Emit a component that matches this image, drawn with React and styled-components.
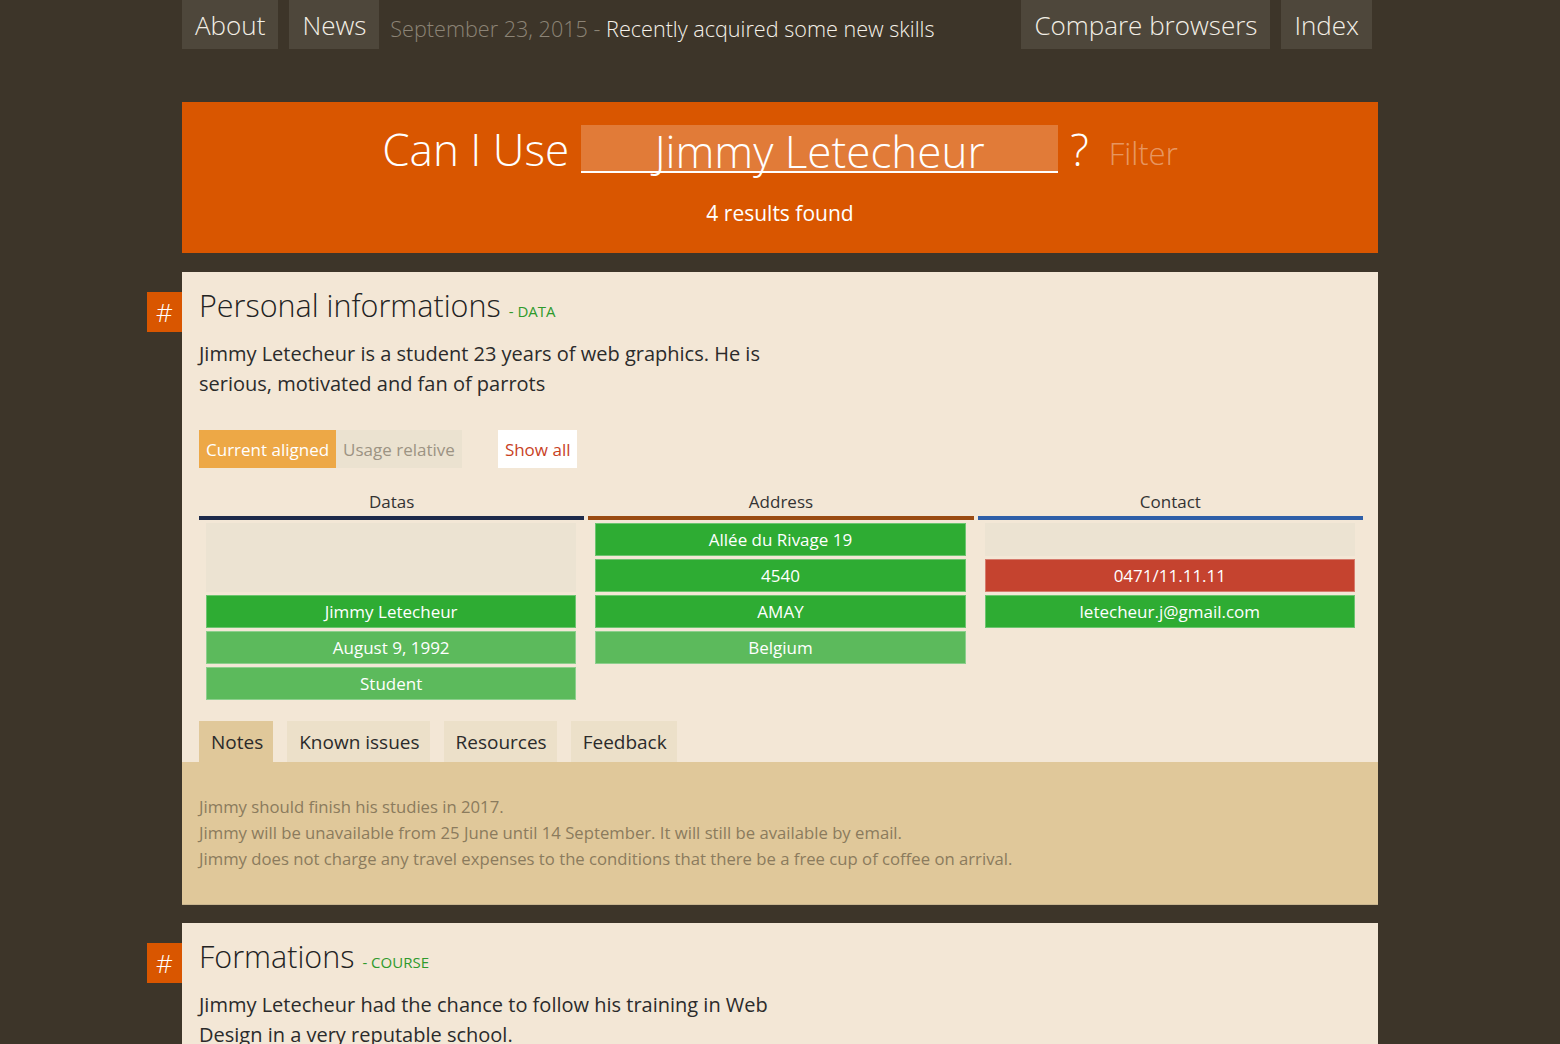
import React from "react";
import styled, { createGlobalStyle } from "styled-components";

const Global = createGlobalStyle`
  body {
    margin: 0;
    background: #3d3529;
    font-family: "Open Sans", "Liberation Sans", sans-serif;
    font-weight: 300;
  }
`;

const Page = styled.div`
  width: 1196px;
  margin: 0 auto;
  padding-bottom: 40px;
`;

const Nav = styled.nav`
  display: flex;
  align-items: stretch;
  justify-content: space-between;
  height: 49px;
`;

const NavGroup = styled.div`
  display: flex;
  align-items: stretch;
  gap: 11px;
  margin-right: ${(p) => (p.$right ? "6px" : "0")};
`;

const NavItem = styled.a`
  display: flex;
  align-items: center;
  padding: 0 13px;
  background: #4e473b;
  color: #f3efe6;
  font-size: 26px;
  font-weight: 300;
  text-decoration: none;
`;

const News = styled.div`
  display: flex;
  align-items: center;
  padding-top: 8px;
  font-size: 21.6px;
  color: #f6f2ea;
  span {
    color: #8c8476;
  }
`;

const Header = styled.header`
  margin-top: 53px;
  background: #d95600;
  height: 151px;
  display: flex;
  flex-direction: column;
  align-items: center;
  color: #fff;
`;

const SearchRow = styled.div`
  display: flex;
  align-items: center;
  margin-top: 22px;
  height: 50px;
`;

const Big = styled.span`
  font-size: 44px;
  font-weight: 300;
  line-height: 1;
`;

const SearchInput = styled.div`
  width: 477px;
  height: 48px;
  margin: 0 12px;
  background: rgba(255, 255, 255, 0.22);
  border-bottom: 2px solid #fff;
  display: flex;
  align-items: center;
  justify-content: center;
  font-size: 44px;
  font-weight: 300;
  line-height: 1;
  padding-top: 6px;
  box-sizing: border-box;
`;

const Filter = styled.span`
  margin-left: 20px;
  margin-top: 8px;
  font-size: 31px;
  color: rgba(255, 255, 255, 0.4);
`;

const Results = styled.div`
  margin-top: 25px;
  font-size: 21px;
  font-weight: 400;
`;

const Card = styled.section`
  position: relative;
  margin-top: ${(p) => (p.$first ? "19px" : "18px")};
  background: #f3e7d6;
  padding: 10px 15px 0 17px;
  border-bottom: 1px solid #c9b58f;
`;

const Hash = styled.div`
  position: absolute;
  left: -35px;
  top: 20px;
  width: 35px;
  height: 40px;
  background: #d95600;
  color: #fff;
  font-size: 26px;
  display: flex;
  align-items: center;
  justify-content: center;
`;

const Title = styled.h2`
  margin: 0;
  font-size: 30.5px;
  font-weight: 300;
  line-height: 46px;
  color: #222;
  small {
    font-size: 15px;
    line-height: 0;
    color: #2e9a2c;
    font-weight: 400;
    margin-left: 8px;
    text-transform: uppercase;
  }
`;

const Desc = styled.p`
  margin: 11px 0 0;
  max-width: 580px;
  font-size: 20px;
  font-weight: 400;
  line-height: 30px;
  color: #2b2b2b;
`;

const Controls = styled.div`
  display: flex;
  margin-top: 31px;
`;

const Toggle = styled.button`
  border: 0;
  height: 38px;
  padding: 0 7px;
  font-family: inherit;
  font-size: 17px;
  font-weight: 400;
  background: ${(p) => (p.$active ? "#eda846" : "#ebe2d0")};
  color: ${(p) => (p.$active ? "#fff" : "#9c9383")};
`;

const ShowAll = styled(Toggle)`
  margin-left: 36px;
  background: #fff;
  color: #c8421f;
`;

const Table = styled.div`
  display: grid;
  grid-template-columns: repeat(3, 1fr);
  gap: 4px;
  margin-top: 22px;
`;

const ColHead = styled.div`
  text-align: center;
  font-size: 17px;
  font-weight: 400;
  line-height: 24px;
  color: #333;
  padding-bottom: 2px;
  border-bottom: 4px solid ${(p) => p.$color};
`;

const Cells = styled.div`
  display: flex;
  flex-direction: column;
  gap: 3px;
  padding: 3px 8px 0 7px;
`;

const cellColors = {
  yes: "#2eac33",
  partial: "#5cba5c",
  no: "#c5432f",
  empty: "#ece3d2",
};

const Cell = styled.div`
  height: ${(p) => 33 * (p.$span || 1) + 3 * ((p.$span || 1) - 1)}px;
  box-sizing: border-box;
  background: ${(p) => cellColors[p.$kind]};
  border: 1px solid ${(p) => (p.$kind === "empty" ? "transparent" : "rgba(255,255,255,0.3)")};
  color: #fff;
  font-size: 17px;
  font-weight: 400;
  display: flex;
  align-items: center;
  justify-content: center;
`;

const Tabs = styled.div`
  display: flex;
  gap: 14px;
  margin-top: 21px;
`;

const Tab = styled.div`
  height: 41px;
  padding: 0 10px 0 12px;
  display: flex;
  align-items: center;
  font-size: 19px;
  font-weight: 400;
  color: #2b2b2b;
  background: ${(p) => (p.$active ? "#e0c89a" : "#ece0c9")};
`;

const Panel = styled.div`
  margin: 0 -15px 0 -17px;
  background: #e0c89a;
  padding: 32px 17px;
  font-size: 16.7px;
  font-weight: 400;
  line-height: 26px;
  color: #8b7b5d;
`;

const columns = [
  {
    title: "Datas",
    color: "#1d2a4a",
    cells: [
      { kind: "empty", span: 2 },
      { kind: "yes", text: "Jimmy Letecheur" },
      { kind: "partial", text: "August 9, 1992" },
      { kind: "partial", text: "Student" },
    ],
  },
  {
    title: "Address",
    color: "#9a4b12",
    cells: [
      { kind: "yes", text: "Allée du Rivage 19" },
      { kind: "yes", text: "4540" },
      { kind: "yes", text: "AMAY" },
      { kind: "partial", text: "Belgium" },
    ],
  },
  {
    title: "Contact",
    color: "#2e5fa8",
    cells: [
      { kind: "empty" },
      { kind: "no", text: "0471/11.11.11" },
      { kind: "yes", text: "letecheur.j@gmail.com" },
    ],
  },
];

export default function App() {
  return (
    <Page>
      <Global />
      <Nav>
        <NavGroup>
          <NavItem>About</NavItem>
          <NavItem>News</NavItem>
          <News>
            <span>September 23, 2015 -&nbsp;</span>Recently acquired some new skills
          </News>
        </NavGroup>
        <NavGroup $right>
          <NavItem>Compare browsers</NavItem>
          <NavItem>Index</NavItem>
        </NavGroup>
      </Nav>

      <Header>
        <SearchRow>
          <Big>Can I Use</Big>
          <SearchInput>Jimmy Letecheur</SearchInput>
          <Big>?</Big>
          <Filter>Filter</Filter>
        </SearchRow>
        <Results>4 results found</Results>
      </Header>

      <Card $first>
        <Hash>#</Hash>
        <Title>
          Personal informations<small>- data</small>
        </Title>
        <Desc>
          Jimmy Letecheur is a student 23 years of web graphics. He is serious, motivated and fan of parrots
        </Desc>
        <Controls>
          <Toggle $active>Current aligned</Toggle>
          <Toggle>Usage relative</Toggle>
          <ShowAll>Show all</ShowAll>
        </Controls>
        <Table>
          {columns.map((col) => (
            <div key={col.title}>
              <ColHead $color={col.color}>{col.title}</ColHead>
              <Cells>
                {col.cells.map((c, i) => (
                  <Cell key={i} $kind={c.kind} $span={c.span}>
                    {c.text}
                  </Cell>
                ))}
              </Cells>
            </div>
          ))}
        </Table>
        <Tabs>
          <Tab $active>Notes</Tab>
          <Tab>Known issues</Tab>
          <Tab>Resources</Tab>
          <Tab>Feedback</Tab>
        </Tabs>
        <Panel>
          Jimmy should finish his studies in 2017.
          <br />
          Jimmy will be unavailable from 25 June until 14 September. It will still be available by email.
          <br />
          Jimmy does not charge any travel expenses to the conditions that there be a free cup of coffee on arrival.
        </Panel>
      </Card>

      <Card>
        <Hash>#</Hash>
        <Title>
          Formations<small>- course</small>
        </Title>
        <Desc>
          Jimmy Letecheur had the chance to follow his training in Web Design in a very reputable school.
        </Desc>
        <Controls />
      </Card>
    </Page>
  );
}
